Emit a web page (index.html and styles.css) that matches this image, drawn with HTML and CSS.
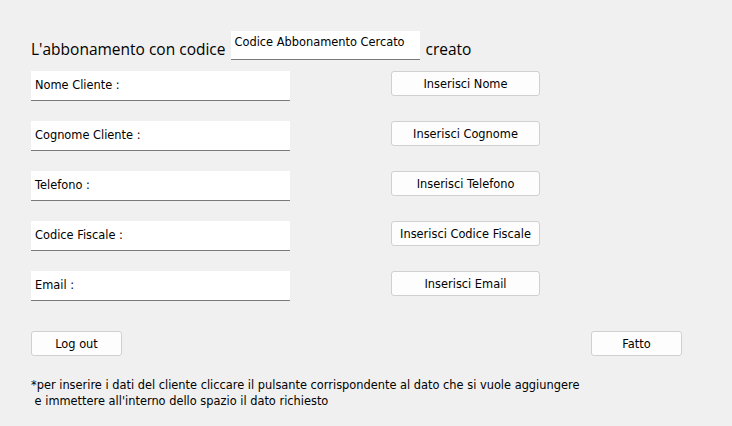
FILE: index.html
```html
<!DOCTYPE html>
<html lang="it">
<head>
<meta charset="utf-8">
<title>Abbonamento creato</title>
<link rel="stylesheet" href="styles.css">
</head>
<body>
<div class="page">
  <div class="title-row">
    <span class="title">L'abbonamento con codice</span>
    <div class="code-box">Codice Abbonamento Cercato</div>
    <span class="title">creato</span>
  </div>
  <div class="rows">
    <div class="row"><div class="field">Nome Cliente :</div><button class="btn btn-wide">Inserisci Nome</button></div>
    <div class="row"><div class="field">Cognome Cliente :</div><button class="btn btn-wide">Inserisci Cognome</button></div>
    <div class="row"><div class="field">Telefono :</div><button class="btn btn-wide">Inserisci Telefono</button></div>
    <div class="row"><div class="field">Codice Fiscale :</div><button class="btn btn-wide">Inserisci Codice Fiscale</button></div>
    <div class="row"><div class="field">Email :</div><button class="btn btn-wide">Inserisci Email</button></div>
  </div>
  <div class="actions">
    <button class="btn btn-small">Log out</button>
    <button class="btn btn-small">Fatto</button>
  </div>
  <p class="note">*per inserire i dati del cliente cliccare il pulsante corrispondente al dato che si vuole aggiungere<br>&nbsp;e immettere all'interno dello spazio il dato richiesto</p>
</div>
</body>
</html>
```
FILE: styles.css
```css
html, body {
  margin: 0;
  padding: 0;
  background: #f0f0f0;
}
body {
  font-family: "DejaVu Sans", "Liberation Sans", sans-serif;
  font-size: 11.4px;
  color: #000;
  width: 732px;
  height: 426px;
  overflow: hidden;
}
.page {
  padding: 31px 0 0 31px;
}
.title-row {
  display: flex;
  align-items: flex-start;
  height: 29px;
}
.title {
  font-family: "Open Sans", "Noto Sans", sans-serif;
  font-size: 15.5px;
  line-height: 20px;
  margin-top: 8px;
}
.code-box {
  box-sizing: border-box;
  width: 189px;
  height: 29px;
  margin: 0 6px 0 5px;
  background: #fff;
  border-bottom: 1px solid #7a7a7a;
  padding: 5px 0 0 4px;
  line-height: 13px;
}
.rows {
  display: flex;
  flex-direction: column;
  gap: 20px;
  margin-top: 11px;
}
.row {
  display: flex;
  align-items: flex-start;
}
.field {
  box-sizing: border-box;
  width: 259px;
  height: 30px;
  background: #fff;
  border-bottom: 1px solid #7a7a7a;
  padding: 8px 0 0 4px;
  line-height: 13px;
}
.btn {
  box-sizing: border-box;
  height: 25px;
  background: #fdfdfd;
  border: 1px solid #d0d0d0;
  border-radius: 3px;
  font-family: inherit;
  font-size: 11.4px;
  color: #000;
  padding: 2px 0 0 0;
  line-height: 21px;
}
.btn-wide {
  width: 149px;
  margin-left: 101px;
}
.actions {
  display: flex;
  justify-content: space-between;
  width: 651px;
  margin-top: 30px;
}
.btn-small {
  width: 91px;
}
.note {
  margin: 21px 0 0 0;
  line-height: 16px;
}
```
